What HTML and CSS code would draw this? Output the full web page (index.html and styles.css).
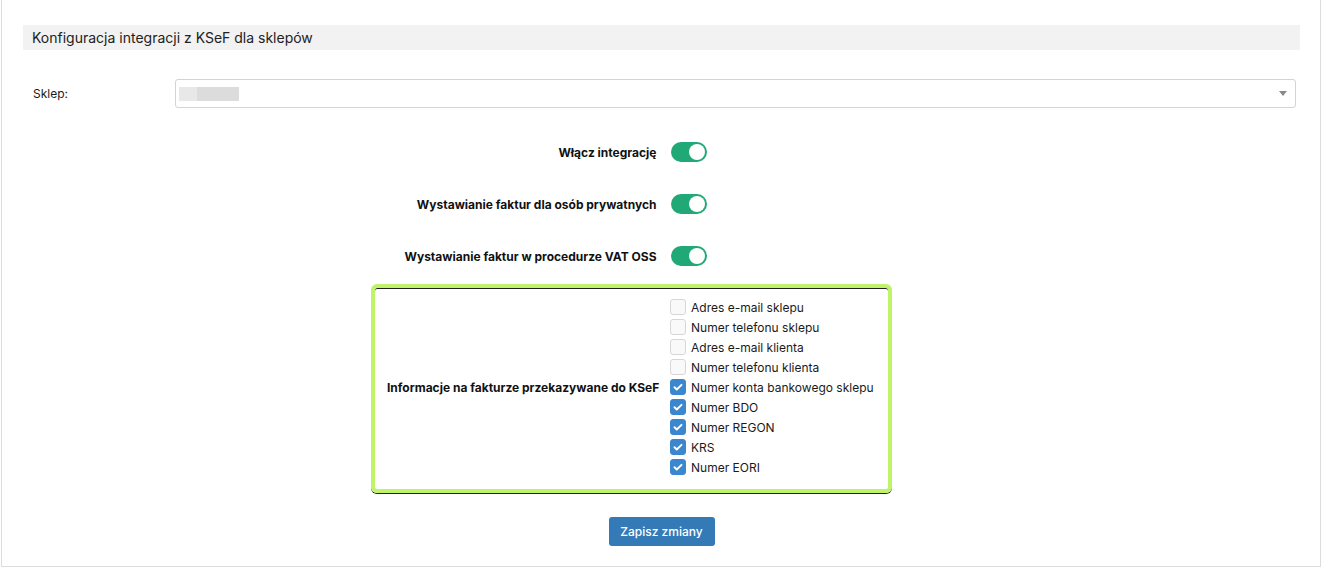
FILE: index.html
```html
<!DOCTYPE html>
<html lang="pl">
<head>
<meta charset="utf-8">
<title>Konfiguracja KSeF</title>
<link rel="stylesheet" href="styles.css">
</head>
<body>
<div class="panel">
  <div class="panel-title">Konfiguracja integracji z KSeF dla sklepów</div>
  <div class="shop-row">
    <label class="shop-label">Sklep:</label>
    <div class="select">
      <span class="select-value"></span>
      <span class="select-arrow"></span>
    </div>
  </div>
  <div class="fields">
    <div class="field">
      <span class="field-label">Włącz integrację</span>
      <span class="toggle on"><span class="knob"></span></span>
    </div>
    <div class="field">
      <span class="field-label">Wystawianie faktur dla osób prywatnych</span>
      <span class="toggle on"><span class="knob"></span></span>
    </div>
    <div class="field last">
      <span class="field-label">Wystawianie faktur w procedurze VAT OSS</span>
      <span class="toggle on"><span class="knob"></span></span>
    </div>
  </div>
  <div class="info-box">
    <div class="info-label">Informacje na fakturze przekazywane do KSeF</div>
    <ul class="checks">
      <li><span class="cb"></span>Adres e-mail sklepu</li>
      <li><span class="cb"></span>Numer telefonu sklepu</li>
      <li><span class="cb"></span>Adres e-mail klienta</li>
      <li><span class="cb"></span>Numer telefonu klienta</li>
      <li><span class="cb checked"><svg viewBox="0 0 16 16"><path d="M4 8.3l2.6 2.6L12 5.5" fill="none" stroke="#fff" stroke-width="2.2" stroke-linecap="round" stroke-linejoin="round"/></svg></span>Numer konta bankowego sklepu</li>
      <li><span class="cb checked"><svg viewBox="0 0 16 16"><path d="M4 8.3l2.6 2.6L12 5.5" fill="none" stroke="#fff" stroke-width="2.2" stroke-linecap="round" stroke-linejoin="round"/></svg></span>Numer BDO</li>
      <li><span class="cb checked"><svg viewBox="0 0 16 16"><path d="M4 8.3l2.6 2.6L12 5.5" fill="none" stroke="#fff" stroke-width="2.2" stroke-linecap="round" stroke-linejoin="round"/></svg></span>Numer REGON</li>
      <li><span class="cb checked"><svg viewBox="0 0 16 16"><path d="M4 8.3l2.6 2.6L12 5.5" fill="none" stroke="#fff" stroke-width="2.2" stroke-linecap="round" stroke-linejoin="round"/></svg></span>KRS</li>
      <li><span class="cb checked"><svg viewBox="0 0 16 16"><path d="M4 8.3l2.6 2.6L12 5.5" fill="none" stroke="#fff" stroke-width="2.2" stroke-linecap="round" stroke-linejoin="round"/></svg></span>Numer EORI</li>
    </ul>
  </div>
  <div class="actions">
    <button class="btn">Zapisz zmiany</button>
  </div>
</div>
</body>
</html>
```
FILE: styles.css
```css
* { box-sizing: border-box; }
html, body { margin: 0; padding: 0; background: #fff; }
body {
  font-family: Inter, "Noto Sans", sans-serif;
  font-size: 12px;
  color: #1a1a1a;
}
.panel {
  margin: -1px 3px 0 1px;
  border: 1px solid #dcdcdc;
  padding: 25px 20px 20px 21px;
}
.panel-title {
  background: #f2f2f2;
  height: 25px;
  line-height: 25px;
  padding-left: 9px;
  font-size: 14px;
  color: #222;
}
.shop-row {
  display: flex;
  align-items: center;
  margin-top: 29px;
  padding-right: 4px;
}
.shop-label {
  width: 152px;
  padding-left: 10px;
}
.select {
  flex: 1;
  height: 29px;
  border: 1px solid #d4d4d4;
  border-radius: 3px;
  display: flex;
  align-items: center;
  justify-content: space-between;
  padding: 0 8px 0 3px;
}
.select-value {
  width: 60px;
  height: 14px;
  background: linear-gradient(90deg, #e8e8e8 0 30%, #dcdcdc 30% 100%);
}
.select-arrow {
  width: 0;
  height: 0;
  border-left: 4px solid transparent;
  border-right: 4px solid transparent;
  border-top: 5px solid #8a8a8a;
}
.fields {
  margin-top: 34px;
  display: flex;
  flex-direction: column;
  gap: 32px;
}
.field {
  display: grid;
  grid-template-columns: 1fr 1fr;
  column-gap: 14px;
  padding-left: 4px;
  align-items: center;
  height: 20px;
}
.field-label {
  text-align: right;
  font-weight: 700;
  color: #111;
}
.toggle {
  width: 36px;
  height: 20px;
  border-radius: 10px;
  background: #20a877;
  display: flex;
  align-items: center;
  justify-content: flex-end;
  padding: 0 2px;
}
.knob {
  width: 16px;
  height: 16px;
  border-radius: 50%;
  background: #fff;
}
.info-box {
  margin: 18px 0 0 348px;
  width: fit-content;
  border: 4px solid #bff46a;
  border-radius: 6px;
  box-shadow: inset 0 1px 0 #222, 0 1px 0 #222;
  display: flex;
  align-items: center;
  padding: 9px 14px 12px 12px;
}
.info-label {
  width: 269px;
  text-align: right;
  font-weight: 700;
  color: #111;
  white-space: nowrap;
  margin-right: 14px;
}
.checks {
  list-style: none;
  margin: 0;
  padding: 0;
  white-space: nowrap;
}
.checks li {
  display: flex;
  align-items: center;
  height: 20px;
  color: #1a1a1a;
}
.cb {
  width: 16px;
  height: 16px;
  border: 1px solid #d6d6d6;
  border-radius: 3px;
  background: #f9f9f9;
  margin-right: 5px;
  flex: none;
  display: flex;
}
.cb.checked {
  background: #3a87cf;
  border-color: #3a87cf;
}
.cb svg { width: 14px; height: 14px; }
.actions {
  display: flex;
  justify-content: center;
  margin-top: 24px;
}
.btn {
  height: 29px;
  width: 106px;
  border: none;
  border-radius: 3px;
  background: #337ab7;
  color: #fff;
  font-family: Inter, "Noto Sans", sans-serif;
  font-size: 12px;
  font-weight: 500;
  padding: 0;
}
```
